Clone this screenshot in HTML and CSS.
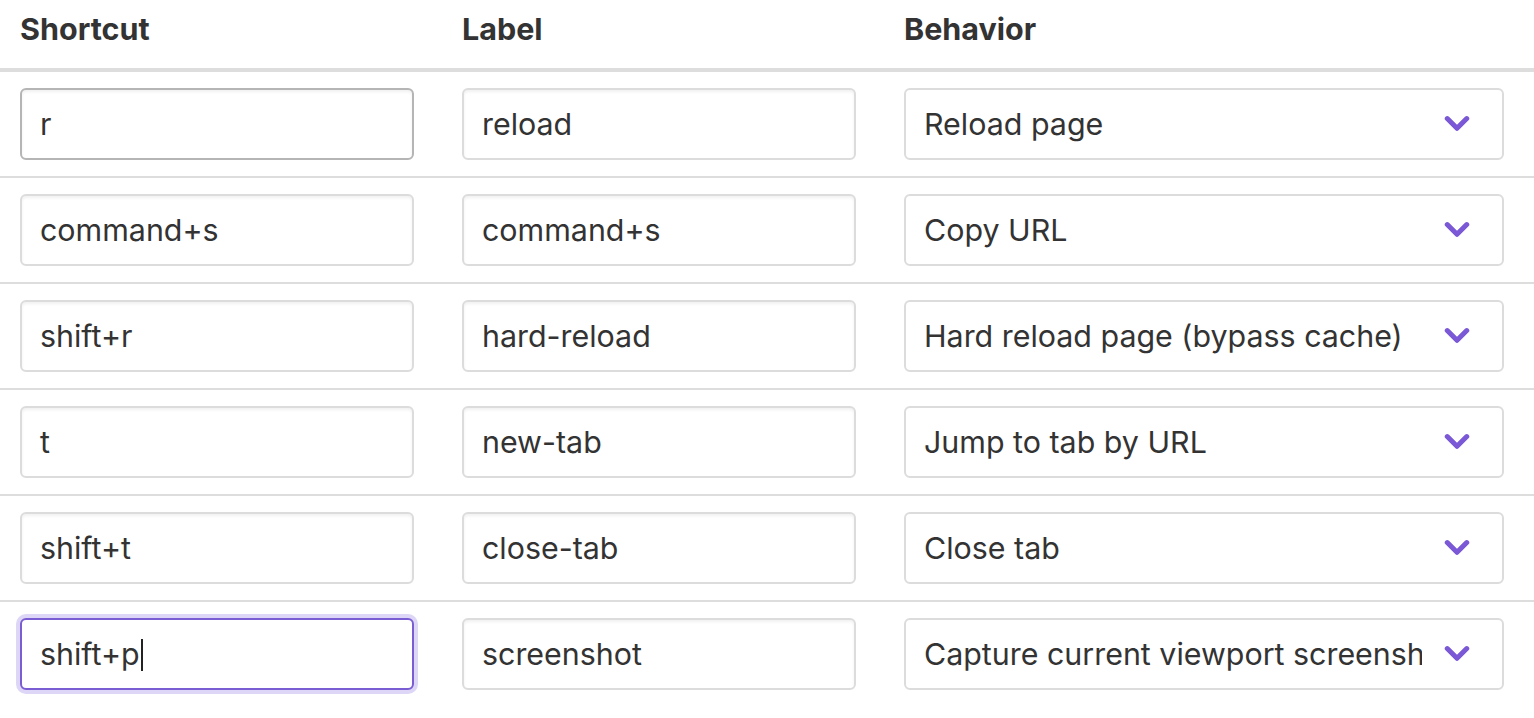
FILE: index.html
```html
<!DOCTYPE html>
<html lang="en">
<head>
<meta charset="utf-8">
<title>Shortcuts</title>
<link rel="stylesheet" href="styles.css">
</head>
<body>
<div class="table">
  <div class="row head">
    <div class="th">Shortcut</div>
    <div class="th">Label</div>
    <div class="th">Behavior</div>
  </div>

  <div class="row">
    <div class="field text hover">r</div>
    <div class="field text">reload</div>
    <div class="field select"><span class="val">Reload page</span><svg class="chev" viewBox="0 0 24 16"><polyline points="3,3 12,12 21,3"/></svg></div>
  </div>

  <div class="row">
    <div class="field text">command+s</div>
    <div class="field text">command+s</div>
    <div class="field select"><span class="val">Copy URL</span><svg class="chev" viewBox="0 0 24 16"><polyline points="3,3 12,12 21,3"/></svg></div>
  </div>

  <div class="row">
    <div class="field text">shift+r</div>
    <div class="field text">hard-reload</div>
    <div class="field select"><span class="val">Hard reload page (bypass cache)</span><svg class="chev" viewBox="0 0 24 16"><polyline points="3,3 12,12 21,3"/></svg></div>
  </div>

  <div class="row">
    <div class="field text">t</div>
    <div class="field text">new-tab</div>
    <div class="field select"><span class="val">Jump to tab by URL</span><svg class="chev" viewBox="0 0 24 16"><polyline points="3,3 12,12 21,3"/></svg></div>
  </div>

  <div class="row">
    <div class="field text">shift+t</div>
    <div class="field text">close-tab</div>
    <div class="field select"><span class="val">Close tab</span><svg class="chev" viewBox="0 0 24 16"><polyline points="3,3 12,12 21,3"/></svg></div>
  </div>

  <div class="row last">
    <div class="field text focused">shift+p<span class="caret"></span></div>
    <div class="field text">screenshot</div>
    <div class="field select"><span class="val">Capture current viewport screenshot</span><svg class="chev" viewBox="0 0 24 16"><polyline points="3,3 12,12 21,3"/></svg></div>
  </div>
</div>
</body>
</html>
```
FILE: styles.css
```css
* { box-sizing: border-box; }

body {
  margin: 0;
  background: #ffffff;
  color: #333333;
  font-family: "Inter", "Roboto", sans-serif;
}

.table {
  width: 100%;
}

.row {
  display: grid;
  grid-template-columns: 394px 394px 600px;
  column-gap: 48px;
  padding: 16px 30px 16px 20px;
  border-bottom: 2px solid #dddddd;
}

.row.last {
  border-bottom: none;
}

.row.head {
  height: 72px;
  padding-top: 0;
  padding-bottom: 10px;
  align-items: center;
  border-bottom: 4px solid #dddddd;
}

.th {
  font-weight: 700;
  font-size: 30.5px;
  line-height: 36px;
  color: #333333;
}

.field {
  height: 72px;
  border: 2px solid #dcdcdc;
  border-radius: 6px;
  background: #ffffff;
  display: flex;
  align-items: center;
  padding: 0 18px;
  font-size: 30.4px;
  color: #333333;
  white-space: nowrap;
  overflow: hidden;
}

.field.text {
  box-shadow: inset 0 2px 3px rgba(0, 0, 0, 0.06);
}

.field.hover {
  border-color: #b5b5b5;
}

.field.focused {
  border-color: #7b5dd3;
  box-shadow: 0 0 0 4px #ddd6f6;
  overflow: visible;
}

.caret {
  display: inline-block;
  width: 2px;
  height: 32px;
  background: #222222;
  margin-left: 1px;
  margin-top: 2px;
}

.field.select {
  justify-content: space-between;
  padding-right: 32px;
}

.val {
  overflow: hidden;
  white-space: nowrap;
  max-width: 498px;
  flex: 0 1 auto;
}

.chev {
  flex: none;
  width: 26px;
  height: 18px;
}

.chev polyline {
  fill: none;
  stroke: #7a58d6;
  stroke-width: 4.6;
  stroke-linecap: round;
  stroke-linejoin: round;
}
```
